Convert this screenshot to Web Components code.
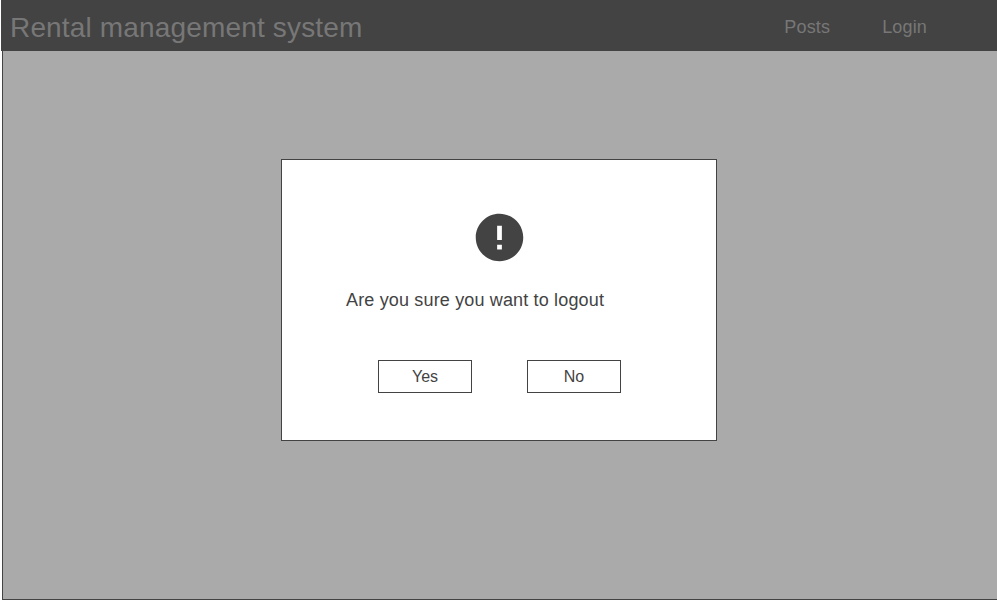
<!DOCTYPE html>
<html lang="en">
<head>
<meta charset="utf-8">
<title>Rental management system</title>
<style>
body { margin: 0; background: #fff; font-family: "Liberation Sans", Arial, sans-serif; overflow: hidden; }
</style>
</head>
<body>
<app-screen>
  <app-header slot="header" heading="Rental management system">
    <nav-link>Posts</nav-link>
    <nav-link>Login</nav-link>
  </app-header>
  <confirm-dialog>
    <alert-icon slot="icon"></alert-icon>
    <span>Are you sure you want to logout</span>
    <dialog-button slot="actions">Yes</dialog-button>
    <dialog-button slot="actions">No</dialog-button>
  </confirm-dialog>
</app-screen>
<script>
const define = (name, html) => customElements.define(name, class extends HTMLElement {
  constructor() {
    super();
    this.attachShadow({ mode: "open" }).innerHTML = html;
  }
  connectedCallback() {
    const h = this.shadowRoot.querySelector("h1");
    if (h) h.textContent = this.getAttribute("heading");
  }
});

define("app-screen", `
<style>
:host { display: flex; flex-direction: column; box-sizing: border-box; width: 997px; height: 600px; padding-left: 1px; }
main { flex: 1; box-sizing: border-box; margin-left: 1px; padding: 108px 0 0 278px; background: #aaa; border: solid #434343; border-width: 0 0 1px 1px; }
</style>
<slot name="header"></slot>
<main><slot></slot></main>`);

define("app-header", `
<style>
:host { display: flex; justify-content: space-between; align-items: center; box-sizing: border-box; height: 51px; padding: 0 70px 0 9px; background: #434343; color: #777; }
h1 { margin: 5px 0 0; font-size: 28px; line-height: 34px; font-weight: 400; letter-spacing: 0.16px; white-space: nowrap; }
nav { display: flex; gap: 52px; padding-top: 3px; }
</style>
<h1></h1>
<nav><slot></slot></nav>`);

define("nav-link", `
<style>:host { display: block; font-size: 18px; line-height: 22px; letter-spacing: 0.16px; }</style>
<slot></slot>`);

define("confirm-dialog", `
<style>
:host { display: flex; flex-direction: column; box-sizing: border-box; width: 436px; height: 282px; padding-top: 49px; background: #fff; border: 1px solid #434343; color: #434343; }
.icon { display: flex; justify-content: center; height: 57px; padding-left: 1px; }
p { margin: 23px 0 0 64px; font-size: 18px; line-height: 22px; letter-spacing: 0.16px; white-space: nowrap; }
.actions { display: flex; gap: 55px; margin: 49px 0 0 96px; }
</style>
<div class="icon"><slot name="icon"></slot></div>
<p><slot></slot></p>
<div class="actions"><slot name="actions"></slot></div>`);

define("alert-icon", `
<style>:host { display: block; width: 57px; height: 57px; } svg { display: block; }</style>
<svg width="57" height="57" viewBox="0 0 24 24" fill="#434343"><path d="M12 2C6.48 2 2 6.48 2 12s4.48 10 10 10 10-4.48 10-10S17.52 2 12 2zm1 15h-2v-2h2v2zm0-4h-2V7h2v6z"/></svg>`);

define("dialog-button", `
<style>
:host { display: block; }
button { display: block; box-sizing: border-box; width: 94px; height: 33px; margin: 0; padding: 0; background: #fff; border: 1px solid #434343; border-radius: 0; color: inherit; font: 16px/31px "Liberation Sans", Arial, sans-serif; text-align: center; }
</style>
<button type="button"><slot></slot></button>`);
</script>
</body>
</html>
